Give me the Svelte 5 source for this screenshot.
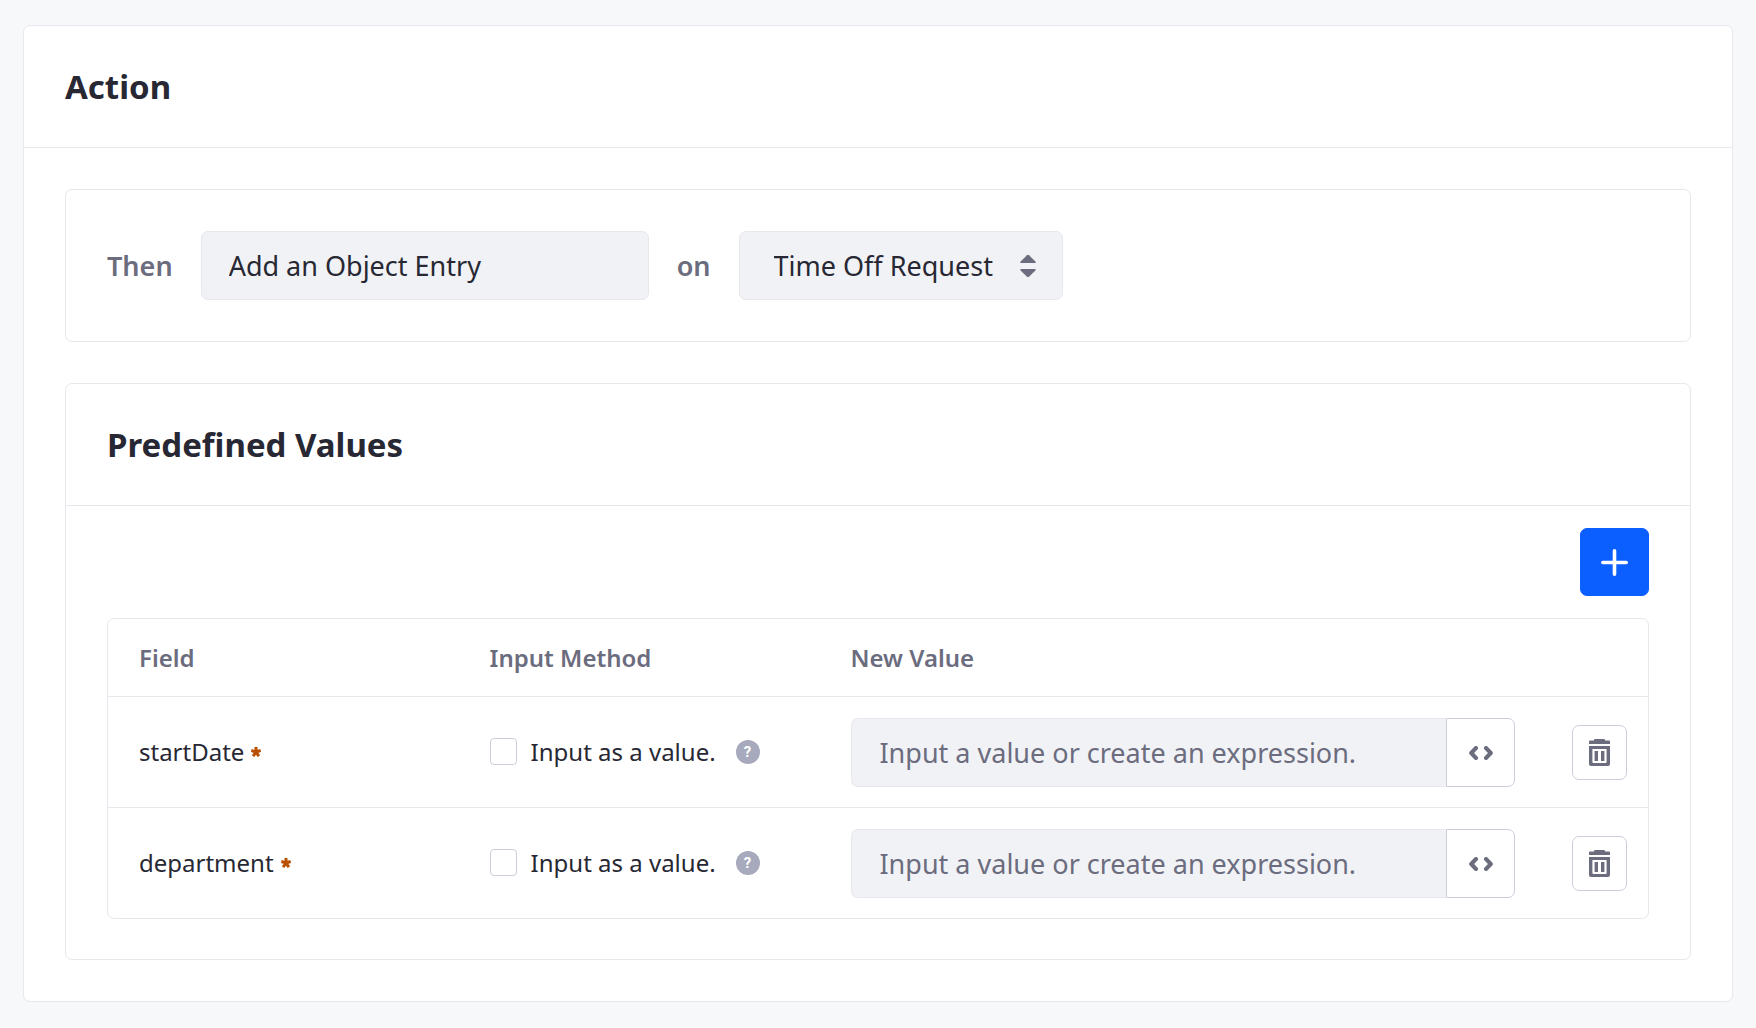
<script>
  let action = $state('Add an Object Entry');
  let target = $state('Time Off Request');
  let rows = $state([
    { name: 'startDate', asValue: false, value: '' },
    { name: 'department', asValue: false, value: '' },
  ]);
</script>

<main class="page">
  <section class="card">
    <header class="card-header"><h1>Action</h1></header>
    <div class="card-body">
      <div class="card rule">
        <label class="word" for="action">Then</label>
        <input id="action" class="field action" type="text" readonly bind:value={action} />
        <label class="word" for="target">on</label>
        <div class="picker">
          <select id="target" class="field" bind:value={target}>
            <option>Time Off Request</option>
          </select>
          <svg class="caret" viewBox="0 0 16 24" aria-hidden="true">
            <path d="M7 1.2 Q8 .3 9 1.2 L15.4 7.4 Q16.4 9 14.8 9 H1.2 Q-.4 9 .6 7.4 Z" />
            <path d="M7 22.8 Q8 23.7 9 22.8 L15.4 16.6 Q16.4 15 14.8 15 H1.2 Q-.4 15 .6 16.6 Z" />
          </svg>
        </div>
      </div>

      <section class="card">
        <header class="card-header"><h2>Predefined Values</h2></header>
        <div class="toolbar">
          <button class="add" type="button" aria-label="Add">
            <svg viewBox="0 0 27 27" aria-hidden="true"><path d="M13.5 1.8V25.2M1.8 13.5H25.2" /></svg>
          </button>
        </div>
        <div class="table-wrap">
          <table>
            <colgroup>
              <col class="col-field" />
              <col class="col-method" />
              <col />
              <col class="col-delete" />
            </colgroup>
            <thead>
              <tr>
                <th scope="col">Field</th>
                <th scope="col">Input Method</th>
                <th scope="col">New Value</th>
                <td></td>
              </tr>
            </thead>
            <tbody>
              {#each rows as row}
                <tr>
                  <td class="text-cell">
                    <span class="name">
                      {row.name}
                      <svg class="required" viewBox="0 0 10 10" role="img" aria-label="required">
                        <path d="M5 5V0M5 5L.3 3.5M5 5L9.7 3.5M5 5L2.1 9.2M5 5L7.9 9.2" />
                      </svg>
                    </span>
                  </td>
                  <td class="text-cell">
                    <div class="method">
                      <label>
                        <input type="checkbox" bind:checked={row.asValue} />
                        Input as a value.
                      </label>
                      <span class="help">?</span>
                    </div>
                  </td>
                  <td>
                    <div class="group">
                      <input
                        class="field"
                        type="text"
                        aria-label="New value for {row.name}"
                        placeholder="Input a value or create an expression."
                        bind:value={row.value}
                      />
                      <button class="code" type="button" aria-label="Expression builder">
                        <svg viewBox="0 0 24 14" aria-hidden="true"><path d="M7 2L2.2 7L7 12M17 2L21.8 7L17 12" /></svg>
                      </button>
                    </div>
                  </td>
                  <td class="delete-cell">
                    <button class="delete" type="button" aria-label="Delete {row.name}">
                      <svg viewBox="0 0 21 27" aria-hidden="true">
                        <path d="M6 0H15Q16 0 16 1.4H20Q21 1.4 21 2.4V5H0V2.4Q0 1.4 1 1.4H5Q5 0 6 0Z" />
                        <path
                          fill-rule="evenodd"
                          d="M0 7H21V25Q21 27 19 27H2Q0 27 0 25ZM3.4 10V23Q3.4 24 4.4 24H16.6Q17.6 24 17.6 23V10Z"
                        />
                        <path d="M5.6 12H9V22H5.6ZM12 12H15.4V22H12Z" />
                      </svg>
                    </button>
                  </td>
                </tr>
              {/each}
            </tbody>
          </table>
        </div>
      </section>
    </div>
  </section>
</main>

<style>
  :global(body) {
    background: #f7f8fa;
  }

  .page,
  .page * {
    box-sizing: border-box;
  }

  .page {
    padding: 25px 23px 26px;
    font-family: 'Noto Sans', sans-serif;
    font-size: 24px;
    line-height: 36px;
    color: #272833;
  }

  .card {
    background: #fff;
    border: 1px solid #e7e7ed;
    border-radius: 7px;
  }

  .card-header {
    padding: 41px;
    border-bottom: 1px solid #e7e7ed;
  }

  h1,
  h2 {
    margin: 0;
    font-size: 33px;
    line-height: 39px;
    font-weight: 700;
  }

  .card-body {
    display: flex;
    flex-direction: column;
    gap: 41px;
    padding: 41px;
  }

  .rule {
    display: flex;
    align-items: center;
    gap: 28px;
    padding: 41px;
  }

  .word {
    font-size: 27px;
    font-weight: 600;
    color: #6b6c7e;
  }

  .field {
    min-width: 0;
    height: 69px;
    margin: 0;
    padding: 0 27px;
    font: inherit;
    font-size: 27px;
    color: inherit;
    background: #f1f2f5;
    border: 1px solid #e7e7ed;
    border-radius: 7px;
  }

  .field::placeholder {
    color: #6b6c7e;
    opacity: 1;
  }

  .action {
    width: 448px;
  }

  .picker {
    display: grid;
    align-items: center;
  }

  .picker > * {
    grid-area: 1 / 1;
  }

  .picker select {
    width: 324px;
    padding: 0 60px 0 34px;
    appearance: none;
  }

  .caret {
    width: 16px;
    height: 24px;
    margin-right: 27px;
    justify-self: end;
    pointer-events: none;
    fill: #6b6c7e;
  }

  .toolbar {
    display: flex;
    justify-content: flex-end;
    padding: 22px 41px;
  }

  button {
    display: flex;
    flex: none;
    align-items: center;
    justify-content: center;
    padding: 0;
    background: #fff;
    border: 1px solid #cdced9;
    border-radius: 7px;
    color: #6b6c7e;
  }

  .add {
    width: 69px;
    height: 68px;
    color: #fff;
    background: #0b5fff;
    border-color: #0b5fff;
  }

  .add svg {
    width: 27px;
    height: 27px;
  }

  .add path,
  .code path {
    fill: none;
    stroke: currentColor;
    stroke-width: 4;
    stroke-linecap: round;
    stroke-linejoin: round;
  }

  .add path {
    stroke-width: 3.6;
  }

  .table-wrap {
    margin: 0 41px 40px;
    border: 1px solid #e7e7ed;
    border-radius: 7px;
  }

  table {
    width: 100%;
    table-layout: fixed;
    border-collapse: separate;
    border-spacing: 0;
  }

  .col-field {
    width: 22.7%;
  }

  .col-method {
    width: 23.5%;
  }

  .col-delete {
    width: 108px;
  }

  th,
  td {
    padding: 21px 25px 20px 32px;
    text-align: left;
    vertical-align: middle;
  }

  th,
  td:first-child {
    padding-left: 31px;
  }

  th:nth-child(2) {
    padding-left: 32px;
  }

  th {
    height: 77px;
    font-weight: 600;
    color: #6b6c7e;
  }

  tbody td {
    border-top: 1px solid #e7e7ed;
  }

  tbody .text-cell {
    padding-top: 20px;
    padding-right: 0;
    padding-bottom: 21px;
  }

  .name {
    display: flex;
    align-items: center;
    gap: 7px;
  }

  .required {
    width: 10px;
    height: 10px;
    fill: none;
    stroke: #b95000;
    stroke-width: 3;
  }

  .method {
    display: flex;
    align-items: center;
    gap: 20px;
    white-space: nowrap;
  }

  .method label {
    display: flex;
    align-items: center;
    gap: 14px;
  }

  input[type='checkbox'] {
    width: 27px;
    height: 27px;
    margin: 0;
    appearance: none;
    background: #fff;
    border: 1px solid #cdced9;
    border-radius: 4px;
  }

  input[type='checkbox']:checked {
    background: #0b5fff;
    border-color: #0b5fff;
  }

  .help {
    width: 24px;
    height: 24px;
    border-radius: 50%;
    background: #a7a9bc;
    color: #fff;
    font-family: Roboto, sans-serif;
    font-size: 15px;
    font-weight: 700;
    line-height: 24px;
    text-align: center;
  }

  .group {
    display: flex;
  }

  .group .field {
    flex: 1;
    border-right: 0;
    border-radius: 7px 0 0 7px;
  }

  .code {
    width: 69px;
    height: 69px;
    border-radius: 0 7px 7px 0;
  }

  .code svg {
    width: 24px;
    height: 14px;
  }

  tbody .delete-cell {
    padding-right: 21px;
  }

  .delete {
    width: 55px;
    height: 55px;
  }

  .delete svg {
    width: 21px;
    height: 27px;
    fill: currentColor;
  }
</style>
